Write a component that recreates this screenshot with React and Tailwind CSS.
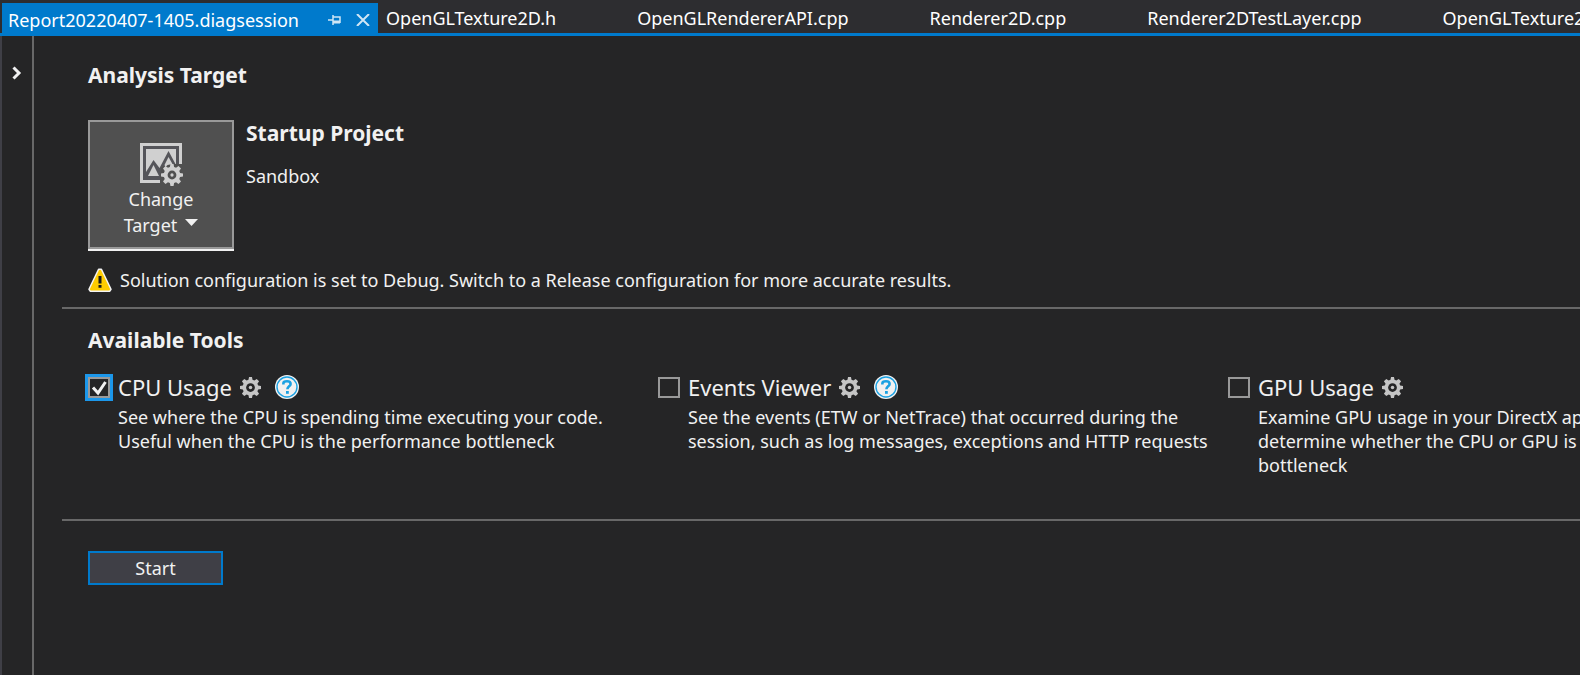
import { useState } from "react";

const GEAR_PATH =
  "M10.3 0h3.4l.6 3.2 2.1.9 2.7-1.9 2.7 2.7-1.9 2.7.9 2.1 3.2.6v3.4l-3.2.6-.9 2.1 1.9 2.7-2.7 2.7-2.7-1.9-2.1.9-.6 3.2h-3.4l-.6-3.2-2.1-.9-2.7 1.9-2.7-2.7 1.9-2.7-.9-2.1L0 13.7v-3.4l3.2-.6.9-2.1-1.9-2.7 2.7-2.7 2.7 1.9 2.1-.9z";

const tabs = [
  "OpenGLTexture2D.h",
  "OpenGLRendererAPI.cpp",
  "Renderer2D.cpp",
  "Renderer2DTestLayer.cpp",
  "OpenGLTexture2D.cpp",
];

const tools = [
  {
    id: "cpu",
    name: "CPU Usage",
    lines: [
      "See where the CPU is spending time executing your code.",
      "Useful when the CPU is the performance bottleneck",
    ],
    help: true,
  },
  {
    id: "events",
    name: "Events Viewer",
    lines: [
      "See the events (ETW or NetTrace) that occurred during the",
      "session, such as log messages, exceptions and HTTP requests",
    ],
    help: true,
  },
  {
    id: "gpu",
    name: "GPU Usage",
    lines: [
      "Examine GPU usage in your DirectX application. Useful to",
      "determine whether the CPU or GPU is the",
      "bottleneck",
    ],
    help: false,
  },
];

function Gear() {
  return (
    <svg viewBox="0 0 24 24" className="block size-[21px]" aria-hidden="true">
      <path d={GEAR_PATH} fill="#c5c5c5" />
      <circle cx="12" cy="12" r="5" fill="#252526" />
      <circle cx="12" cy="12" r="2" fill="#c5c5c5" />
    </svg>
  );
}

function HelpIcon() {
  return (
    <svg viewBox="0 0 24 24" className="block size-6" aria-hidden="true">
      <circle cx="12" cy="12" r="12" fill="#f1f1f1" />
      <circle cx="12" cy="12" r="10" fill="none" stroke="#1ba1e2" strokeWidth="1.4" />
      <path
        d="M8.4 9.6V8.3C8.400 6.700 10 6.300 12 6.300s3.600.6 3.600 2.600c0 2.400-3.200 2.500-3.200 5.300"
        fill="none"
        stroke="#1ba1e2"
        strokeWidth="2.6"
      />
      <rect x="11" y="16" width="2.8" height="2.8" fill="#1ba1e2" />
    </svg>
  );
}

function TargetIcon() {
  return (
    <svg viewBox="0 0 43 43" className="block size-[43px]" aria-hidden="true">
      <path d="M0 0h42v40H0z" fill="#d0d0d0" />
      <path d="M3 3h36v34H3z" fill="#55555a" />
      <path d="M6 6h30v28H6z" fill="#d0d0d0" />
      <path d="M6 29l7.500-12 6 8L28.500 8 36 22v14H6z" fill="#55555a" />
      <path d="M8 33l5.500-11 5.500 11z" fill="#d0d0d0" />
      <path d="M20 41v-7l1-9 6-4h16v20z" fill="#505050" />
      <path d="M24.500 22l4-8 4 7-5 1-2 2z" fill="#d0d0d0" />
      <svg x="21" y="21" width="22" height="22" viewBox="0 0 24 24">
        <path d={GEAR_PATH} fill="#d0d0d0" />
        <circle cx="12" cy="12" r="4.800" fill="#505050" />
        <circle cx="12" cy="12" r="1.800" fill="#d0d0d0" />
      </svg>
    </svg>
  );
}

function WarningIcon() {
  return (
    <svg viewBox="0 0 24 24" className="block size-6" aria-hidden="true">
      <path
        d="M10.600 1.200h2.800L23 21.300 21.800 23.200H2.200L1 21.300z"
        fill="#ffcc00"
        stroke="#f4f4f4"
        strokeWidth="1.500"
        strokeLinejoin="round"
      />
      <path d="M10.500 8h3v7.500h-3zM10.500 17h3v2.800h-3z" fill="#1a1a1a" />
    </svg>
  );
}

function Tool({ tool, checked, onChange }) {
  return (
    <section className="w-[570px] shrink-0">
      <div className="flex h-7 items-center">
        <span className="relative flex h-[21px] w-[22px] items-center">
          <input
            id={tool.id}
            type="checkbox"
            checked={checked}
            onChange={onChange}
            className="peer h-[21px] w-[22px] appearance-none border-2 border-[#999999] bg-[#252526] checked:outline-3 checked:outline-[#1c97ea]"
          />
          <svg
            viewBox="0 0 22 21"
            className="pointer-events-none absolute inset-0 hidden peer-checked:block"
            aria-hidden="true"
          >
            <path d="M5 10.500l5 5.500L17.500 5" fill="none" stroke="#f1f1f1" strokeWidth="3" />
          </svg>
        </span>
        <label htmlFor={tool.id} className="ml-2 text-[22px] leading-7">
          {tool.name}
        </label>
        <button type="button" aria-label={`${tool.name} settings`} className="ml-2">
          <Gear />
        </button>
        {tool.help && (
          <button type="button" aria-label={`${tool.name} help`} className="ml-[14px]">
            <HelpIcon />
          </button>
        )}
      </div>
      <p className="ml-[30px] mt-1 leading-6">
        {tool.lines.map((line) => (
          <span key={line} className="block">
            {line}
          </span>
        ))}
      </p>
    </section>
  );
}

export default function App() {
  const [selected, setSelected] = useState({ cpu: true });
  const toggle = (id) => setSelected((s) => ({ ...s, [id]: !s[id] }));

  return (
    <div className="flex min-h-screen flex-col overflow-hidden whitespace-nowrap bg-[#252526] font-['Noto_Sans','Open_Sans',sans-serif] text-lg text-[#f1f1f1]">
      <nav className="flex h-9 items-stretch border-b-3 border-[#007acc] bg-[#2d2d30] pl-[2px] leading-7 text-white">
        <div className="-mb-[3px] mt-[3px] flex w-[376px] shrink-0 items-center bg-[#007acc] pl-[6px]">
          <a href="#report">Report20220407-1405.diagsession</a>
          <button type="button" aria-label="Pin tab" className="ml-auto">
            <svg viewBox="0 0 14 12" className="block h-3 w-[14px]" fill="none" stroke="#d0e6f5" strokeWidth="1.500" aria-hidden="true">
              <path d="M0 6h5M5 1v10M5 3h7v6" />
              <path d="M5 8h7" strokeWidth="3" />
            </svg>
          </button>
          <button type="button" aria-label="Close tab" className="ml-[14px] mr-2">
            <svg viewBox="0 0 14 12" className="block h-3 w-[14px]" fill="none" stroke="#d0e6f5" strokeWidth="2" aria-hidden="true">
              <path d="M1 0l12 12M13 0L1 12" />
            </svg>
          </button>
        </div>
        <div className="flex items-center gap-[81px] pl-2 pt-[3px]">
          {tabs.map((tab) => (
            <a key={tab} href={`#${tab}`}>
              {tab}
            </a>
          ))}
        </div>
      </nav>

      <div className="flex grow border-l-2 border-[#3f3f46]">
        <aside className="w-8 shrink-0 border-r-2 border-[#686868] pl-[10px] pt-[30px]">
          <button type="button" aria-label="Expand panel" className="block">
            <svg viewBox="0 0 10 14" className="block h-[14px] w-[10px]" aria-hidden="true">
              <path d="M1.500 1.500L7 7l-5.500 5.500" fill="none" stroke="#f1f1f1" strokeWidth="3" />
            </svg>
          </button>
        </aside>

        <main className="min-w-0 grow pl-7">
          <div className="pl-[26px]">
            <h1 className="pt-6 text-[21px] leading-[30px] font-bold">Analysis Target</h1>
            <div className="mt-[30px] flex gap-3">
              <button
                type="button"
                className="flex h-[131px] w-[146px] flex-col items-center border-b-2 border-[#f1f1f1]"
              >
                <span className="flex w-full grow flex-col items-center border-2 border-[#999999] bg-[#505050] pt-[21px]">
                  <TargetIcon />
                  <span className="leading-[26px]">Change</span>
                  <span className="flex gap-2 leading-[26px]">
                    Target
                    <svg viewBox="0 0 13 7" className="mt-[7px] h-[7px] w-[13px]" aria-hidden="true">
                      <path d="M0 0h13L6.500 7z" fill="#f1f1f1" />
                    </svg>
                  </span>
                </span>
              </button>
              <div>
                <h2 className="text-[21px] leading-[26px] font-bold">Startup Project</h2>
                <p className="mt-4 leading-7">Sandbox</p>
              </div>
            </div>
            <p className="mt-[15px] flex h-7 items-center gap-2">
              <WarningIcon />
              Solution configuration is set to Debug. Switch to a Release configuration for more accurate results.
            </p>
          </div>

          <div className="mt-[13px] border-t-2 border-[#686868] pl-[26px]">
            <h2 className="pt-4 text-[21px] leading-[30px] font-bold">Available Tools</h2>
            <div className="mt-[18px] flex h-[146px]">
              {tools.map((tool) => (
                <Tool
                  key={tool.id}
                  tool={tool}
                  checked={!!selected[tool.id]}
                  onChange={() => toggle(tool.id)}
                />
              ))}
            </div>
          </div>

          <div className="border-t-2 border-[#686868] pl-[26px] pt-[30px]">
            <button
              type="button"
              className="h-[34px] w-[135px] border-2 border-[#007acc] bg-[#3f3f46] leading-[28px]"
            >
              Start
            </button>
          </div>
        </main>
      </div>
    </div>
  );
}
